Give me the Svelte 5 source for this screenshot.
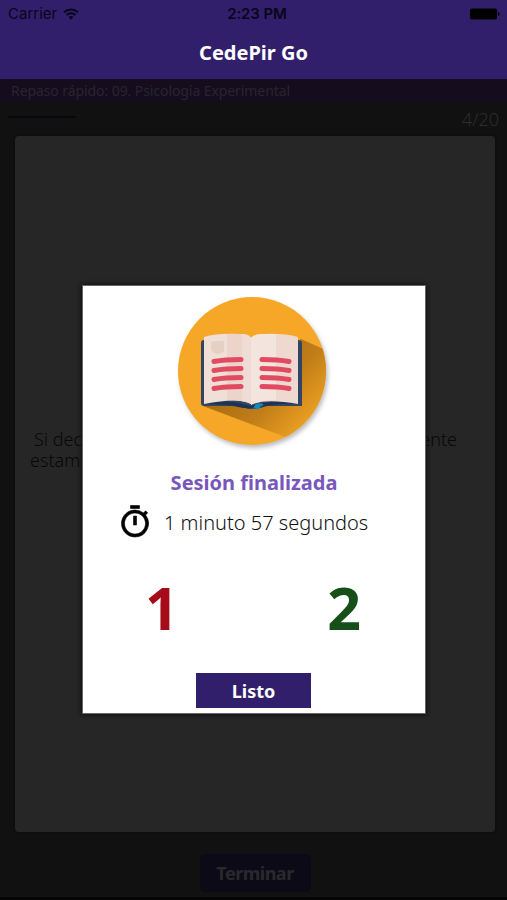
<script>
	export let title = 'CedePir Go';
	export let topic = 'Repaso rápido: 09. Psicología Experimental';
	export let position = '4/20';
	export let duration = '1 minuto 57 segundos';
	export let wrong = 1;
	export let right = 2;
</script>

<div class="screen">
	<header class="header">
		<div class="status">
			<div class="status__carrier">
				<span>Carrier</span>
				<svg width="16" height="12" viewBox="0 0 16 12" fill="none" stroke="#08051a" stroke-width="1.9">
					<path d="M1 4.3a10.2 10.2 0 0 1 14 0" />
					<path d="M3.5 7a6.6 6.6 0 0 1 9 0" />
					<path d="M8 11.7 5.5 9.1a3.7 3.7 0 0 1 5 0z" fill="#08051a" stroke="none" />
				</svg>
			</div>
			<span class="status__time">2:23 PM</span>
			<svg class="status__battery" width="30" height="12" viewBox="0 0 30 12">
				<rect x="0" y="0.5" width="27" height="11" rx="2" />
				<path d="M28 4q1.6 .4 1.6 2T28 8z" />
			</svg>
		</div>
		<h1 class="header__title"><span>{title}</span></h1>
	</header>

	<div class="topic"><span>{topic}</span></div>

	<div class="progress">
		<div class="progress__bar"></div>
		<span class="progress__count">{position}</span>
	</div>

	<main class="question">
		<div class="question__line"><span>Si dec</span><span>ente</span></div>
		<div class="question__line question__line--second"><span>estam</span></div>
	</main>

	<footer class="footer">
		<button class="footer__button"><span>Terminar</span></button>
	</footer>

	<section class="modal">
		<svg class="modal__book" width="160" height="160" viewBox="0 0 160 160">
			<defs>
				<linearGradient id="cast" x1="70" y1="75" x2="135" y2="135" gradientUnits="userSpaceOnUse">
					<stop offset="0" stop-color="#a96c12" />
					<stop offset="0.5" stop-color="#c07d18" />
					<stop offset="1" stop-color="#eda022" />
				</linearGradient>
				<clipPath id="disc"><circle cx="80" cy="80" r="74" /></clipPath>
			</defs>
			<circle class="modal__disc" cx="80" cy="80" r="74" fill="#f7a728" />
			<path clip-path="url(#disc)" d="M31 115 116 147 160 160V62L129 48z" fill="url(#cast)" />
			<path d="M32 49h93q5 0 5 3v63H88q-2 3-5 3h-7q-3 0-5-3H32q-3 0-3-3V52q0-3 3-3z" fill="#304566" />
			<path d="M32 113q24-5 39 0l8 2 8-2q19-5 37 0-20-1-36 4H71q-16-4-39-4z" fill="#203451" />
			<!-- pages -->
			<path d="M32 46q13-4 36-3 8 0 11 4v66q-12-7-47 0z" fill="#f0dfd6" />
			<path d="M55 43h13q8 0 11 4v66q-8-4-24-4z" fill="#ecd4cb" />
			<path d="M70 43q7 0 9 4v66q-3-3-9-3z" fill="#efdcd4" />
			<path d="M79 47q3-4 11-4 22-1 36 3v67q-33-6-47 1z" fill="#efd8d0" />
			<path d="M79 47q3-4 11-4h14v66q-17 0-25 5z" fill="#f3e4dd" />
			<path d="M39 51q7-2 13-1v9q0 3-7 4-6-2-6-5z" fill="#e5d1c4" />
			<path d="M83 114q3-3 8-1 1 2-2 2l-3 4-2-2-3 1z" fill="#118ac0" />
			<!-- text lines -->
			<g fill="none" stroke="#e04b62" stroke-width="5" stroke-linecap="round">
				<path d="M42 70.500q11-2 27-2M42 79.500q11-2 27-2M42 88.500q11-2 27-2M42 97.500q11-2 27-2" />
				<path d="M90 68.500q16 0 27 2M90 77.500q16 0 27 2M90 86.500q16 0 27 2M90 95.500q16 0 27 2" />
			</g>
		</svg>

		<h2 class="modal__title"><span>Sesión finalizada</span></h2>

		<div class="modal__time">
			<svg width="36" height="36" viewBox="0 0 24 24" stroke="#000" stroke-width="0.4">
				<path
					d="M15 1H9v2h6V1zm-4 13h2V8h-2v6zm8.03-6.61 1.42-1.42c-.43-.51-.9-.99-1.41-1.41l-1.42 1.42A8.96 8.96 0 0 0 12 4c-4.97 0-9 4.03-9 9s4.02 9 9 9a8.99 8.99 0 0 0 7.03-14.61zM12 20c-3.87 0-7-3.13-7-7s3.13-7 7-7 7 3.13 7 7-3.13 7-7 7z"
				/>
			</svg>
			<span>{duration}</span>
		</div>

		<div class="modal__scores">
			<span class="modal__score modal__score--wrong">{wrong}</span>
			<span class="modal__score modal__score--right">{right}</span>
		</div>

		<button class="modal__button"><span>Listo</span></button>
	</section>
</div>

<style>
	:global(body) {
		margin: 0;
		background: #111;
	}

	.screen {
		position: relative;
		box-sizing: border-box;
		display: flex;
		flex-direction: column;
		width: 507px;
		height: 900px;
		overflow: hidden;
		border-bottom: 3px solid #050505;
		background: #111;
		font-family: 'Noto Sans', 'Open Sans', sans-serif;
	}

	button {
		padding: 0;
		border: 0;
		font-family: inherit;
	}

	.header {
		height: 79px;
		background: #321f6b;
	}

	.status {
		display: grid;
		grid-template-columns: 1fr auto 1fr;
		align-items: center;
		height: 27px;
		padding: 0 7px 0 8px;
		font-family: Inter, sans-serif;
		font-size: 15px;
		color: #08051a;
	}

	.status__carrier {
		display: flex;
		align-items: center;
		gap: 6px;
	}

	.status__time {
		padding-left: 6px;
		font-weight: 600;
		letter-spacing: -0.1px;
	}

	.status__battery {
		justify-self: end;
		fill: #000;
	}

	.header__title {
		margin: 0;
		padding-top: 12px;
		font-size: 20px;
		line-height: 28px;
		text-align: center;
		color: #fff;
	}

	.topic {
		height: 22px;
		padding-left: 11px;
		background: #150d1d;
		font-size: 14px;
		line-height: 23px;
		letter-spacing: -0.08px;
		color: #29242f;
	}

	.progress {
		display: flex;
		justify-content: space-between;
		align-items: center;
		height: 35px;
		padding: 0 8px;
	}

	.progress__bar {
		width: 68px;
		height: 2px;
		margin-top: -4px;
		background: #08070b;
	}

	.progress__count {
		font-size: 18px;
		font-weight: 300;
		color: #2c2c2c;
	}

	.question {
		flex: 1;
		box-sizing: border-box;
		margin: 0 12px 0 15px;
		padding: 293px 38px 0 19px;
		border-radius: 4px;
		background: #262626;
		box-shadow: 0 0 3px #0a0a0a;
		font-size: 18px;
		font-weight: 300;
		line-height: 21px;
		color: #080808;
	}

	.question__line {
		display: flex;
		justify-content: space-between;
	}

	.question__line--second {
		margin-left: -4px;
	}

	.footer {
		display: flex;
		justify-content: center;
		height: 42px;
		padding: 22px 0 1px 3px;
	}

	.footer__button {
		width: 111px;
		height: 38px;
		border-radius: 5px;
		background: #0c0a17;
		font-size: 18px;
		font-weight: 700;
		letter-spacing: -0.5px;
		color: #29292d;
	}

	.modal {
		position: absolute;
		top: 286px;
		left: 83px;
		display: flex;
		flex-direction: column;
		align-items: center;
		width: 342px;
		height: 427px;
		background: #fff;
		box-shadow: 0 0 0 1px #666, 0 0 4px 2px #111;
	}

	.modal__book {
		margin: 5px 4px 0 0;
	}

	.modal__disc {
		filter: drop-shadow(2px 3px 2px rgba(40, 40, 50, 0.3));
	}

	.modal__title {
		margin: 18px 0 0;
		font-size: 20px;
		line-height: 28px;
		color: #7857bd;
	}

	.modal__time {
		display: flex;
		align-items: center;
		align-self: stretch;
		gap: 11px;
		height: 36px;
		margin-top: 7px;
		padding-left: 34px;
		font-size: 20px;
		font-weight: 300;
		color: #111;
	}

	.modal__scores {
		display: flex;
		justify-content: space-between;
		align-self: stretch;
		margin-top: 27px;
		padding: 0 64px 0 62px;
		font-size: 59px;
		font-weight: 700;
		line-height: 80px;
	}

	.modal__score--wrong {
		color: #a50b19;
	}

	.modal__score--right {
		color: #174f18;
	}

	.modal__button {
		width: 115px;
		height: 35px;
		margin: auto 1px 5px 0;
		background: #321f6b;
		font-size: 18px;
		font-weight: 700;
		color: #fff;
	}
</style>
